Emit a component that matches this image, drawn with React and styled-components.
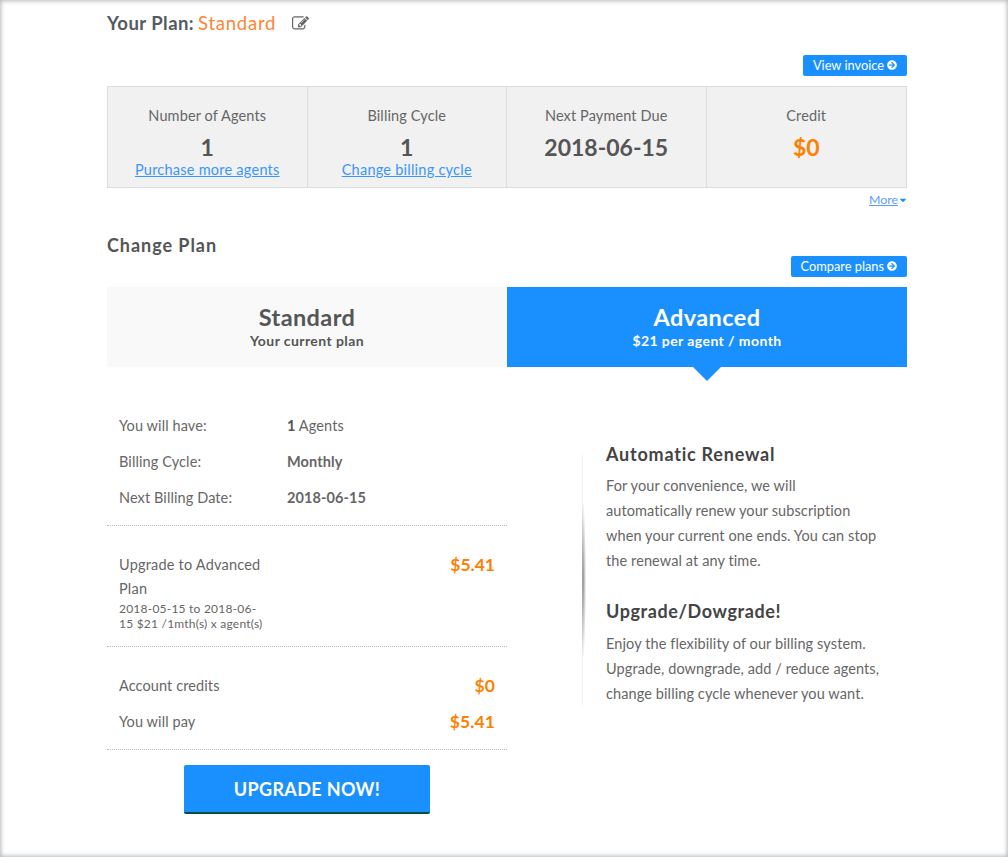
import React from "react";
import styled, { createGlobalStyle } from "styled-components";
import { FaArrowCircleRight, FaCaretDown } from "react-icons/fa";

const Global = createGlobalStyle`
  html, body { margin: 0; padding: 0; background: #fff; }
  body { font-family: Lato, "Open Sans", sans-serif; color: #555; }
`;
const Frame = styled.div`
  width: 1008px; height: 857px; box-sizing: border-box; overflow: hidden; position: relative;
  box-shadow: inset 0 0 4px 1px #b4b6b8;
  padding: 11px 101px 0 107px;
`;
const Title = styled.div`
  height: 24px; display: flex; align-items: center; font-size: 18.5px; line-height: 24px; font-weight: 700; color: #555a60; letter-spacing: .45px;
`;
const PlanName = styled.span`
  color: #ff8534; font-weight: 400; margin-left: 4px; letter-spacing: .75px;
`;
const EditSvg = styled.svg`
  width: 17px; height: 17px; fill: #666; margin-left: 16px;
`;
const EditIcon = () => (
  <EditSvg viewBox="0 0 1792 1792" aria-hidden="true">
    <path d="M888 1184l116-116-152-152-116 116v56h96v96h56zm440-720q-16-16-33 1l-350 350q-17 17-1 33t33-1l350-350q17-17 1-33zm80 594v190q0 119-84.5 203.5t-203.5 84.5h-832q-119 0-203.5-84.5t-84.5-203.5v-832q0-119 84.5-203.5t203.5-84.5h832q63 0 117 25 15 7 18 23 3 17-9 29l-49 49q-14 14-32 8-23-6-45-6h-832q-66 0-113 47t-47 113v832q0 66 47 113t113 47h832q66 0 113-47t47-113v-126q0-13 9-22l64-64q15-15 35-7t20 29zm-96-738l288 288-672 672h-288v-288zm444 132l-92 92-288-288 92-92q28-28 68-28t68 28l152 152q28 28 28 68t-28 68z" />
  </EditSvg>
);
const RightRow = styled.div`
  display: flex; justify-content: flex-end;
  margin-top: ${p => p.$top}px;
`;
const SmallBtn = styled.a`
  height: 21px; box-sizing: border-box; display: flex; align-items: center; justify-content: center; gap: 3px;
  padding: 0 10px 1px; background: #1a90ff; color: #fff; border-radius: 2px; font-size: 12.8px; white-space: nowrap;
  svg { width: 10px; height: 10px; }
`;
const Stats = styled.div`
  display: grid; grid-template-columns: repeat(4, 1fr);
  height: 102px; box-sizing: border-box; margin-top: 10px;
  border: 1px solid #dcdcdc; background: #f1f1f1;
`;
const Stat = styled.div`
  display: flex; flex-direction: column; align-items: center; padding-top: 20px;
  border-right: ${p => p.$last ? "none" : "1px solid #dcdcdc"};
`;
const StatLabel = styled.div`
  font-size: 14.5px; line-height: 18px; color: #666; letter-spacing: .12px;
`;
const StatValue = styled.div`
  font-size: 23px; line-height: 28px; font-weight: 700; margin-top: 8px;
  color: ${p => p.$accent ? "#ff8000" : "#555"};
`;
const StatLink = styled.a`
  font-size: 14.5px; line-height: 17px; color: #3a96ff; text-decoration: underline; letter-spacing: .24px;
`;
const MoreRow = styled.div`
  display: flex; justify-content: flex-end; align-items: center; gap: 1px; margin-top: 4px; height: 15px;
  font-size: 12.3px; color: #5b9bff;
  svg { width: 8px; height: 10px; color: #1a90ff; }
`;
const MoreLink = styled.a`
  text-decoration: underline;
`;
const Heading = styled.h2`
  margin: 26px 0 0; font-size: 18px; line-height: 24px; font-weight: 700; color: #555; letter-spacing: .95px;
`;
const Tabs = styled.div`
  display: grid; grid-template-columns: 1fr 1fr; height: 80px; margin-top: 10px;
`;
const Tab = styled.div`
  position: relative; display: flex; flex-direction: column; align-items: center; padding-top: 17px;
  background: ${p => p.$active ? "#1a90ff" : "#f9f9f9"};
  color: ${p => p.$active ? "#fff" : "#555"};
  ${p => p.$active && `&::after { content: ""; position: absolute; left: 50%; bottom: -14px; margin-left: -14px;
    border-left: 14px solid transparent; border-right: 14px solid transparent; border-top: 14px solid #1a90ff; }`}
`;
const TabName = styled.div`
  font-size: 23.5px; line-height: 26px; font-weight: 700; letter-spacing: .4px;
`;
const TabSub = styled.div`
  font-size: 14px; line-height: 18px; font-weight: 700; letter-spacing: .42px; margin-top: 2px;
`;
const Columns = styled.div`
  display: grid; grid-template-columns: 400px 400px; margin-top: 40px;
`;
const Left = styled.div``;
const Section = styled.div`
  padding: ${p => p.$pad || "0 12px"};
  border-bottom: 1px dotted #bbb;
`;
const Row = styled.div`
  display: flex; height: 36px; align-items: center; font-size: 14.5px; color: #666; letter-spacing: .1px;
`;
const Label = styled.div`
  width: 168px;
`;
const Val = styled.div`
  font-weight: ${p => p.$bold ? 700 : 400}; color: #666;
  b { font-weight: 700; color: #555; }
`;
const PayRow = styled.div`
  display: flex; justify-content: space-between; align-items: center; height: 36px; font-size: 14.5px; color: #666; letter-spacing: .1px;
`;
const Money = styled.div`
  font-size: 17.5px; font-weight: 700; color: #ff8000;
`;
const UpgradeRow = styled.div`
  display: flex; justify-content: space-between;
`;
const UpgradeText = styled.div`
  font-size: 14.5px; line-height: 24px; color: #666; letter-spacing: .2px; white-space: nowrap;
`;
const UpgradeNote = styled.div`
  font-size: 12px; line-height: 15px; color: #666; white-space: nowrap; letter-spacing: .22px;
`;
const UpgradeMoney = styled(Money)`
  line-height: 24px;
`;
const CtaWrap = styled.div`
  display: flex; justify-content: center; margin-top: 15px;
`;
const Cta = styled.button`
  width: 246px; height: 49px; box-sizing: border-box; border: 0; border-bottom: 2px solid #004d4d; border-radius: 2px;
  background: #1a90ff; color: #fff; font-family: inherit; font-size: 18px; font-weight: 700; letter-spacing: .35px;
`;
const Right = styled.div`
  position: relative; margin: 48px 0 0 75px; padding-left: 23px; height: 250px;
  border-left: 1px solid #f0f0f0;
  &::before { content: ""; position: absolute; left: -1px; top: 30px; width: 5px; height: 190px;
    background: radial-gradient(ellipse 3px 80px at 1px 50%, #8f8f8f, transparent); }
`;
const InfoHead = styled.h3`
  font-size: 18px; line-height: 24px; font-weight: 700; color: #444; letter-spacing: ${p => p.$tight ? ".6px" : ".78px"};
  margin: ${p => p.$top ? p.$top + "px" : "-13px"} 0 0;
`;
const InfoText = styled.p`
  margin: ${p => p.$gap}px 0 0; font-size: 14.5px; line-height: 25px; color: #666; white-space: nowrap; letter-spacing: .1px;
`;

export default function App() {
  return (
    <Frame>
      <Global />
      <Title>Your Plan:<PlanName>Standard</PlanName><EditIcon /></Title>
      <RightRow $top={20}><SmallBtn>View invoice <FaArrowCircleRight /></SmallBtn></RightRow>
      <Stats>
        <Stat><StatLabel>Number of Agents</StatLabel><StatValue>1</StatValue><StatLink>Purchase more agents</StatLink></Stat>
        <Stat><StatLabel>Billing Cycle</StatLabel><StatValue>1</StatValue><StatLink>Change billing cycle</StatLink></Stat>
        <Stat><StatLabel>Next Payment Due</StatLabel><StatValue>2018-06-15</StatValue></Stat>
        <Stat $last><StatLabel>Credit</StatLabel><StatValue $accent>$0</StatValue></Stat>
      </Stats>
      <MoreRow><MoreLink>More</MoreLink><FaCaretDown /></MoreRow>
      <Heading>Change Plan</Heading>
      <RightRow $top={-1}><SmallBtn>Compare plans <FaArrowCircleRight /></SmallBtn></RightRow>
      <Tabs>
        <Tab><TabName>Standard</TabName><TabSub>Your current plan</TabSub></Tab>
        <Tab $active><TabName>Advanced</TabName><TabSub>$21 per agent / month</TabSub></Tab>
      </Tabs>
      <Columns>
        <Left>
          <Section $pad="0 12px 10px">
            <Row><Label>You will have:</Label><Val><b>1</b> Agents</Val></Row>
            <Row><Label>Billing Cycle:</Label><Val $bold>Monthly</Val></Row>
            <Row><Label>Next Billing Date:</Label><Val $bold>2018-06-15</Val></Row>
          </Section>
          <Section $pad="27px 12px 15px">
            <UpgradeRow>
              <div>
                <UpgradeText>Upgrade to Advanced<br />Plan</UpgradeText>
                <UpgradeNote>2018-05-15 to 2018-06-<br />15 $21 /1mth(s) x agent(s)</UpgradeNote>
              </div>
              <UpgradeMoney>$5.41</UpgradeMoney>
            </UpgradeRow>
          </Section>
          <Section $pad="20px 12px 10px">
            <PayRow>Account credits<Money>$0</Money></PayRow>
            <PayRow>You will pay<Money>$5.41</Money></PayRow>
          </Section>
          <CtaWrap><Cta>UPGRADE NOW!</Cta></CtaWrap>
        </Left>
        <Right>
          <InfoHead>Automatic Renewal</InfoHead>
          <InfoText $gap={7}>For your convenience, we will<br />automatically renew your subscription<br />when your current one ends. You can stop<br />the renewal at any time.</InfoText>
          <InfoHead $top={26} $tight>Upgrade/Dowgrade!</InfoHead>
          <InfoText $gap={8}>Enjoy the flexibility of our billing system.<br />Upgrade, downgrade, add / reduce agents,<br />change billing cycle whenever you want.</InfoText>
        </Right>
      </Columns>
    </Frame>
  );
}
